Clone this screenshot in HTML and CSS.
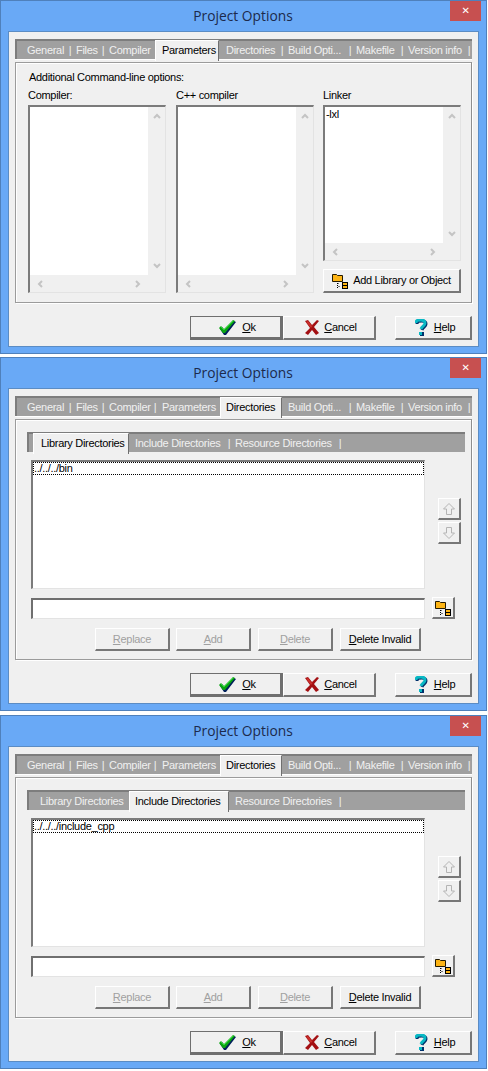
FILE: index.html
```html
<!DOCTYPE html>
<html lang="en">
<head>
<meta charset="utf-8">
<title>Project Options</title>
<link rel="stylesheet" href="styles.css">
</head>
<body>
<svg class="defs" width="0" height="0" aria-hidden="true">
  <symbol id="check" viewBox="0 0 17 15">
    <path d="M1 9 3 7 6 11 15 1 17 2 7 15H5Z" fill="#00205a"/>
    <path d="M0 8 2 6 5 9 14 0 16 1 6 13H4Z" fill="#0aa512"/>
    <path d="M2 7 5 10 14 1" fill="none" stroke="#2fd83a"/>
  </symbol>
  <symbol id="cross" viewBox="0 0 14 15">
    <path d="M0 1 3 0 7 5 12 0 14 1 9 7 14 13 11 15 7 10 3 15 0 13 5 8Z" fill="#a30f12"/>
    <path d="M1 2 3 1 7 6 9 4 6 8 2 3Z" fill="#c9302c"/>
  </symbol>
  <symbol id="help" viewBox="0 0 13 17">
    <path d="M2 5C2 2 4 2 7 2 10 2 11 3 11 5 11 8 8 8 7 11" fill="none" stroke="#00316b" stroke-width="3"/>
    <path d="M1 4C1 1 3 1 6 1 9 1 10 2 10 4 10 7 7 7 6 10" fill="none" stroke="#08b8c4" stroke-width="3"/>
    <rect x="5" y="13" width="4" height="4" fill="#00316b"/>
    <rect x="4" y="13" width="3" height="3" fill="#08b8c4"/>
  </symbol>
  <symbol id="folder" viewBox="0 0 16 16">
    <path d="M0.500 1.500H4.500L5.500 2.500H10.500V8.500H0.500Z" fill="#fdb414" stroke="#241a00"/>
    <path d="M5.500 10.500H7M6.500 13.500H8M5.500 10V15" fill="none" stroke="#000" stroke-dasharray="1 1"/>
    <rect x="10.500" y="9.500" width="5" height="3" fill="#fdb414" stroke="#000"/>
    <rect x="10.500" y="12.500" width="5" height="3" fill="#fdb414" stroke="#000"/>
  </symbol>
  <symbol id="chev-up" viewBox="0 0 8 6"><path d="M1 5 4 2 7 5" fill="none" stroke="#c4c4c4" stroke-width="2"/></symbol>
  <symbol id="chev-down" viewBox="0 0 8 6"><path d="M1 1 4 4 7 1" fill="none" stroke="#c4c4c4" stroke-width="2"/></symbol>
  <symbol id="chev-left" viewBox="0 0 6 8"><path d="M5 1 2 4 5 7" fill="none" stroke="#c4c4c4" stroke-width="2"/></symbol>
  <symbol id="chev-right" viewBox="0 0 6 8"><path d="M1 1 4 4 1 7" fill="none" stroke="#c4c4c4" stroke-width="2"/></symbol>
  <symbol id="arrow-up" viewBox="0 0 12 12"><path d="M6 .5 11.500 6H8.500V11.500H3.500V6H.5Z" fill="none" stroke="#b4b4b4"/></symbol>
  <symbol id="arrow-down" viewBox="0 0 12 12"><path d="M6 11.500 11.500 6H8.500V.5H3.500V6H.5Z" fill="none" stroke="#b4b4b4"/></symbol>
</svg>

<section class="window window-first">
  <header class="titlebar"><span></span><h1 class="title">Project Options</h1><span class="close">&#x2715;</span></header>
  <div class="client">
    <nav class="tabs">
      <span class="tab t-general">General</span><i class="sep">|</i><span class="tab t-files">Files</span><i class="sep">|</i><span class="tab t-compiler">Compiler</span><span class="tab tab-active t-params">Parameters</span><span class="tab t-dirs">Directories</span><i class="sep">|</i><span class="tab t-build">Build Opti...</span><i class="sep">|</i><span class="tab t-make">Makefile</span><i class="sep">|</i><span class="tab t-ver">Version info</span><i class="sep">|</i>
    </nav>
    <div class="panel panel-params">
      <p class="lead">Additional Command-line options:</p>
      <div class="columns">
        <div class="col">
          <label class="col-label">Compiler:</label>
          <div class="memo memo-tall">
            <div class="memo-text"></div>
            <div class="sb-v"><svg class="chev-v"><use href="#chev-up"/></svg><svg class="chev-v"><use href="#chev-down"/></svg></div>
            <div class="sb-h"><svg class="chev-h"><use href="#chev-left"/></svg><svg class="chev-h"><use href="#chev-right"/></svg></div>
          </div>
        </div>
        <div class="col">
          <label class="col-label">C++ compiler</label>
          <div class="memo memo-tall">
            <div class="memo-text"></div>
            <div class="sb-v"><svg class="chev-v"><use href="#chev-up"/></svg><svg class="chev-v"><use href="#chev-down"/></svg></div>
            <div class="sb-h"><svg class="chev-h"><use href="#chev-left"/></svg><svg class="chev-h"><use href="#chev-right"/></svg></div>
          </div>
        </div>
        <div class="col">
          <label class="col-label">Linker</label>
          <div class="memo memo-short">
            <div class="memo-text">-lxl</div>
            <div class="sb-v"><svg class="chev-v"><use href="#chev-up"/></svg><svg class="chev-v"><use href="#chev-down"/></svg></div>
            <div class="sb-h"><svg class="chev-h"><use href="#chev-left"/></svg><svg class="chev-h"><use href="#chev-right"/></svg></div>
          </div>
          <button class="btn btn-add"><svg class="ico-folder"><use href="#folder"/></svg>Add Library or Object</button>
        </div>
      </div>
    </div>
    <footer class="actions">
      <button class="btn btn-main btn-default"><svg class="ico-check"><use href="#check"/></svg><span><u>O</u>k</span></button>
      <button class="btn btn-main"><svg class="ico-cross"><use href="#cross"/></svg><span><u>C</u>ancel</span></button>
      <button class="btn btn-help"><svg class="ico-help"><use href="#help"/></svg><span><u>H</u>elp</span></button>
    </footer>
  </div>
</section>

<section class="window window-second">
  <header class="titlebar"><span></span><h1 class="title">Project Options</h1><span class="close">&#x2715;</span></header>
  <div class="client">
    <nav class="tabs">
      <span class="tab t-general">General</span><i class="sep">|</i><span class="tab t-files">Files</span><i class="sep">|</i><span class="tab t-compiler2">Compiler</span><i class="sep">|</i><span class="tab t-params2">Parameters</span><span class="tab tab-active t-dirs-active">Directories</span><span class="tab t-build">Build Opti...</span><i class="sep">|</i><span class="tab t-make">Makefile</span><i class="sep">|</i><span class="tab t-ver">Version info</span><i class="sep">|</i>
    </nav>
    <div class="panel panel-dirs">
      <nav class="subtabs">
        <span class="subtab subtab-active st-lib">Library Directories</span><span class="subtab st-inc">Include Directories</span><i class="sep">|</i><span class="subtab st-res">Resource Directories</span><i class="sep">|</i>
      </nav>
      <div class="list-row">
        <div class="list"><div class="list-item">../../../bin</div></div>
        <div class="updown">
          <button class="btn btn-arrow"><svg class="ico-arrow"><use href="#arrow-up"/></svg></button>
          <button class="btn btn-arrow"><svg class="ico-arrow"><use href="#arrow-down"/></svg></button>
        </div>
      </div>
      <div class="input-row">
        <div class="input"></div>
        <button class="btn btn-browse"><svg class="ico-folder"><use href="#folder"/></svg></button>
      </div>
      <div class="edit-row">
        <button class="btn btn-edit is-disabled"><span><u>R</u>eplace</span></button>
        <button class="btn btn-edit is-disabled"><span><u>A</u>dd</span></button>
        <button class="btn btn-edit is-disabled"><span><u>D</u>elete</span></button>
        <button class="btn btn-invalid"><span><u>D</u>elete Invalid</span></button>
      </div>
    </div>
    <footer class="actions">
      <button class="btn btn-main btn-default"><svg class="ico-check"><use href="#check"/></svg><span><u>O</u>k</span></button>
      <button class="btn btn-main"><svg class="ico-cross"><use href="#cross"/></svg><span><u>C</u>ancel</span></button>
      <button class="btn btn-help"><svg class="ico-help"><use href="#help"/></svg><span><u>H</u>elp</span></button>
    </footer>
  </div>
</section>

<section class="window window-third">
  <header class="titlebar"><span></span><h1 class="title">Project Options</h1><span class="close">&#x2715;</span></header>
  <div class="client">
    <nav class="tabs">
      <span class="tab t-general">General</span><i class="sep">|</i><span class="tab t-files">Files</span><i class="sep">|</i><span class="tab t-compiler2">Compiler</span><i class="sep">|</i><span class="tab t-params2">Parameters</span><span class="tab tab-active t-dirs-active">Directories</span><span class="tab t-build">Build Opti...</span><i class="sep">|</i><span class="tab t-make">Makefile</span><i class="sep">|</i><span class="tab t-ver">Version info</span><i class="sep">|</i>
    </nav>
    <div class="panel panel-dirs">
      <nav class="subtabs">
        <span class="subtab st-lib">Library Directories</span><span class="subtab subtab-active st-inc-active">Include Directories</span><span class="subtab st-res">Resource Directories</span><i class="sep">|</i>
      </nav>
      <div class="list-row">
        <div class="list"><div class="list-item">../../../include_cpp</div></div>
        <div class="updown">
          <button class="btn btn-arrow"><svg class="ico-arrow"><use href="#arrow-up"/></svg></button>
          <button class="btn btn-arrow"><svg class="ico-arrow"><use href="#arrow-down"/></svg></button>
        </div>
      </div>
      <div class="input-row">
        <div class="input"></div>
        <button class="btn btn-browse"><svg class="ico-folder"><use href="#folder"/></svg></button>
      </div>
      <div class="edit-row">
        <button class="btn btn-edit is-disabled"><span><u>R</u>eplace</span></button>
        <button class="btn btn-edit is-disabled"><span><u>A</u>dd</span></button>
        <button class="btn btn-edit is-disabled"><span><u>D</u>elete</span></button>
        <button class="btn btn-invalid"><span><u>D</u>elete Invalid</span></button>
      </div>
    </div>
    <footer class="actions">
      <button class="btn btn-main btn-default"><svg class="ico-check"><use href="#check"/></svg><span><u>O</u>k</span></button>
      <button class="btn btn-main"><svg class="ico-cross"><use href="#cross"/></svg><span><u>C</u>ancel</span></button>
      <button class="btn btn-help"><svg class="ico-help"><use href="#help"/></svg><span><u>H</u>elp</span></button>
    </footer>
  </div>
</section>
</body>
</html>
```
FILE: styles.css
```css
* { box-sizing: border-box; }
html, body { margin: 0; padding: 0; background: #fff; }
body { width: 488px; height: 1071px; overflow: hidden; font: 11px/13px "Liberation Sans", Arial, sans-serif; letter-spacing: -0.3px; color: #000; }
.defs { position: absolute; }

.window { width: 487px; background: #69a9f6; border: 1px solid #4f80bb; padding: 0 7px 7px; }
.window-first { height: 354px; margin-bottom: 3px; }
.window-second { height: 354px; margin-bottom: 4px; }
.window-third { height: 354px; }

.titlebar { height: 30px; display: grid; grid-template-columns: 1fr auto 1fr; align-items: start; margin-right: -1px; }
.title { margin: 6px 2px 0 0; font: 400 13.800px/18px "Open Sans", sans-serif; letter-spacing: 0; color: #1c2a4c; }
.close { justify-self: end; width: 31px; height: 20px; margin-right: -1px; background: #c75050; color: #fff; font: 700 10px/20px "DejaVu Sans", sans-serif; text-align: center; }

.client { height: 316px; background: #f0f0f0; border: 1px solid #5b8cc4; padding: 7px 6px 0; }

.tabs { display: flex; height: 20px; background: #a0a0a0; border-top: 2px solid #7d7d7d; border-left: 2px solid #7d7d7d; color: #f0f0f0; align-items: stretch; box-shadow: 0 1px 0 #fff; }
.tab, .subtab { display: block; padding-left: 3px; line-height: 19px; white-space: nowrap; }
.sep { display: block; font-style: normal; width: 6px; text-align: center; line-height: 18px; }
.t-general { width: 43px; margin-left: 7px; }
.t-files { width: 27px; }
.t-compiler { width: 49px; }
.t-compiler2 { width: 46px; }
.t-params { width: 64px; margin-right: 1px; padding-left: 6px; }
.t-params2 { width: 62px; padding-left: 4px; }
.t-dirs { width: 59px; padding-left: 6px; }
.t-dirs-active { width: 62px; margin-right: 3px; padding-left: 5px; }
.t-build { width: 62px; }
.t-make { width: 46px; }
.t-ver { width: 61px; }
.tab-active, .subtab-active { background: #f0f0f0; color: #000; border-top: 1px solid #fff; border-left: 1px solid #fff; border-right: 1px solid #6f6f6f; margin-top: -1px; height: 21px; }

.panel { background: #f0f0f0; border: 1px solid #9b9b9b; border-right-color: #8e8e8e; margin-top: 3px; box-shadow: inset 1px 1px 0 #fff, 1px 1px 0 #fff; width: 457px; }
.panel-params { height: 241px; padding: 8px 0 0 12px; }
.panel-dirs { height: 241px; padding: 12px 0 0 11px; }

.lead { margin: 0 0 5px 1px; height: 13px; }
.columns { display: grid; grid-template-columns: 148px 147px 138px; }
.col-label { display: block; height: 13px; margin-bottom: 3px; }
.memo { width: 138px; display: grid; grid-template-columns: 1fr 17px; grid-template-rows: 1fr 17px; background: #f0f0f0; border-top: 2px solid #7b7b7b; border-left: 2px solid #7b7b7b; border-right: 1px solid #e3e3e3; border-bottom: 1px solid #e3e3e3; }
.memo-tall { height: 188px; }
.memo-short { height: 156px; margin-bottom: 8px; }
.memo-text { background: #fff; padding: 1px 0 0 1px; }
.sb-v { display: flex; flex-direction: column; justify-content: space-between; align-items: center; padding: 6px 0; }
.sb-h { display: flex; justify-content: space-between; align-items: center; padding: 0 7px; }
.chev-v { width: 8px; height: 6px; }
.chev-h { width: 6px; height: 8px; }

.btn { display: flex; align-items: center; justify-content: center; gap: 5px; padding: 0; font: inherit; letter-spacing: inherit; color: #000; background: #f0f0f0; border-style: solid; border-width: 1px 2px 2px 1px; border-color: #fff #777 #777 #fff; outline: 0; }
.btn-add { width: 138px; height: 24px; }
.ico-folder { width: 16px; height: 16px; flex: none; }
.ico-check { width: 17px; height: 15px; }
.ico-cross { width: 14px; height: 15px; }
.ico-help { width: 13px; height: 17px; }

.actions { display: flex; margin-top: 13px; padding-left: 175px; }
.btn-main { width: 93px; height: 24px; padding-left: 4px; }
.btn-default { border-width: 1px 3px 3px 1px; border-color: #6f6f6f; gap: 6px; }
.btn-help { width: 77px; height: 24px; margin-left: 19px; padding-left: 4px; gap: 6px; }

.subtabs { display: flex; width: 438px; height: 20px; background: #a0a0a0; border-top: 2px solid #7d7d7d; border-left: 2px solid #7d7d7d; color: #f0f0f0; }
.st-lib { width: 96px; margin-left: 4px; padding-left: 7px; }
.st-inc { width: 97px; padding-left: 6px; }
.st-inc-active { width: 100px; margin-right: 3px; padding-left: 5px; }
.st-res { width: 105px; }

.list-row { display: flex; margin: 8px 0 0 4px; }
.list { width: 394px; height: 129px; background: #fff; border-top: 2px solid #7b7b7b; border-left: 2px solid #7b7b7b; border-right: 1px solid #e3e3e3; border-bottom: 1px solid #e3e3e3; }
.list-item { height: 13px; outline: 1px dotted #000; outline-offset: -1px; padding-left: 1px; line-height: 13px; }
.updown { display: flex; flex-direction: column; gap: 2px; margin: 38px 0 0 13px; }
.btn-arrow { width: 23px; height: 22px; }
.ico-arrow { width: 12px; height: 12px; }

.input-row { display: flex; margin: 8px 0 0 4px; align-items: flex-end; }
.input { width: 394px; height: 21px; background: #fff; border-top: 2px solid #6f6f6f; border-left: 2px solid #6f6f6f; border-right: 1px solid #e3e3e3; border-bottom: 1px solid #e3e3e3; }
.btn-browse { width: 23px; height: 22px; margin-left: 7px; }

.edit-row { display: flex; gap: 7px; margin: 9px 0 0 68px; }
.btn-edit { width: 75px; height: 23px; }
.btn-edit:first-child { margin-right: -1px; }
.btn-invalid { width: 81px; height: 23px; }
.is-disabled { color: #a0a0a0; }
```
